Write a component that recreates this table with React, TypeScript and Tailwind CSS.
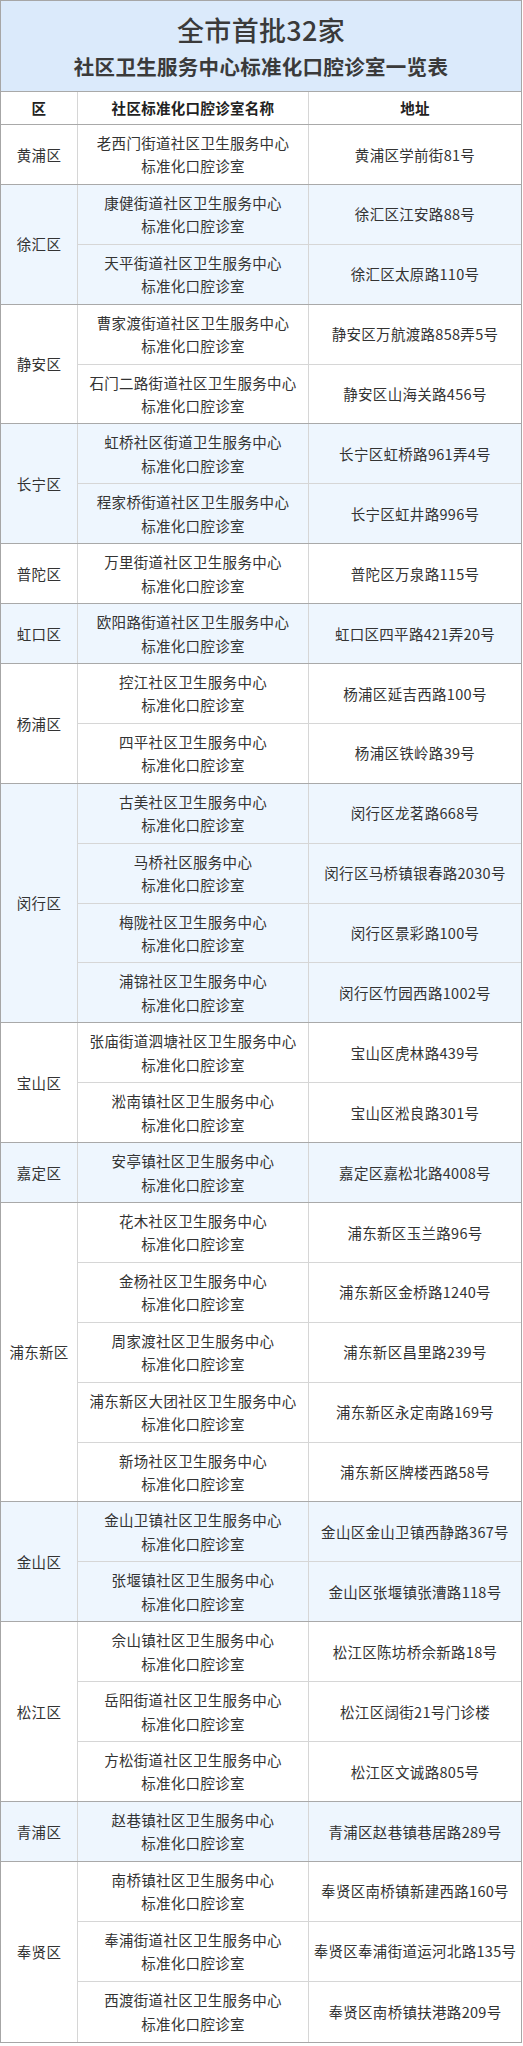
import React from "react";

type Clinic = { name: string; addr: string };
type District = { name: string; clinics: Clinic[] };

const SUFFIX = "标准化口腔诊室";

const districts: District[] = [
  { name: "黄浦区", clinics: [{ name: "老西门街道社区卫生服务中心", addr: "黄浦区学前街81号" }] },
  {
    name: "徐汇区",
    clinics: [
      { name: "康健街道社区卫生服务中心", addr: "徐汇区江安路88号" },
      { name: "天平街道社区卫生服务中心", addr: "徐汇区太原路110号" },
    ],
  },
  {
    name: "静安区",
    clinics: [
      { name: "曹家渡街道社区卫生服务中心", addr: "静安区万航渡路858弄5号" },
      { name: "石门二路街道社区卫生服务中心", addr: "静安区山海关路456号" },
    ],
  },
  {
    name: "长宁区",
    clinics: [
      { name: "虹桥社区街道卫生服务中心", addr: "长宁区虹桥路961弄4号" },
      { name: "程家桥街道社区卫生服务中心", addr: "长宁区虹井路996号" },
    ],
  },
  { name: "普陀区", clinics: [{ name: "万里街道社区卫生服务中心", addr: "普陀区万泉路115号" }] },
  { name: "虹口区", clinics: [{ name: "欧阳路街道社区卫生服务中心", addr: "虹口区四平路421弄20号" }] },
  {
    name: "杨浦区",
    clinics: [
      { name: "控江社区卫生服务中心", addr: "杨浦区延吉西路100号" },
      { name: "四平社区卫生服务中心", addr: "杨浦区铁岭路39号" },
    ],
  },
  {
    name: "闵行区",
    clinics: [
      { name: "古美社区卫生服务中心", addr: "闵行区龙茗路668号" },
      { name: "马桥社区服务中心", addr: "闵行区马桥镇银春路2030号" },
      { name: "梅陇社区卫生服务中心", addr: "闵行区景彩路100号" },
      { name: "浦锦社区卫生服务中心", addr: "闵行区竹园西路1002号" },
    ],
  },
  {
    name: "宝山区",
    clinics: [
      { name: "张庙街道泗塘社区卫生服务中心", addr: "宝山区虎林路439号" },
      { name: "淞南镇社区卫生服务中心", addr: "宝山区淞良路301号" },
    ],
  },
  { name: "嘉定区", clinics: [{ name: "安亭镇社区卫生服务中心", addr: "嘉定区嘉松北路4008号" }] },
  {
    name: "浦东新区",
    clinics: [
      { name: "花木社区卫生服务中心", addr: "浦东新区玉兰路96号" },
      { name: "金杨社区卫生服务中心", addr: "浦东新区金桥路1240号" },
      { name: "周家渡社区卫生服务中心", addr: "浦东新区昌里路239号" },
      { name: "浦东新区大团社区卫生服务中心", addr: "浦东新区永定南路169号" },
      { name: "新场社区卫生服务中心", addr: "浦东新区牌楼西路58号" },
    ],
  },
  {
    name: "金山区",
    clinics: [
      { name: "金山卫镇社区卫生服务中心", addr: "金山区金山卫镇西静路367号" },
      { name: "张堰镇社区卫生服务中心", addr: "金山区张堰镇张漕路118号" },
    ],
  },
  {
    name: "松江区",
    clinics: [
      { name: "佘山镇社区卫生服务中心", addr: "松江区陈坊桥佘新路18号" },
      { name: "岳阳街道社区卫生服务中心", addr: "松江区阔街21号门诊楼" },
      { name: "方松街道社区卫生服务中心", addr: "松江区文诚路805号" },
    ],
  },
  { name: "青浦区", clinics: [{ name: "赵巷镇社区卫生服务中心", addr: "青浦区赵巷镇巷居路289号" }] },
  {
    name: "奉贤区",
    clinics: [
      { name: "南桥镇社区卫生服务中心", addr: "奉贤区南桥镇新建西路160号" },
      { name: "奉浦街道社区卫生服务中心", addr: "奉贤区奉浦街道运河北路135号" },
      { name: "西渡街道社区卫生服务中心", addr: "奉贤区南桥镇扶港路209号" },
    ],
  },
];

function DistrictGroup({ district, shaded, last }: { district: District; shaded: boolean; last: boolean }) {
  const n = district.clinics.length;
  return (
    <div className={`flex ${shaded ? "bg-[#eef6fe]" : "bg-white"} ${last ? "" : "border-b border-[#a9a9a9]"}`}>
      <div className="flex w-[77px] shrink-0 items-center justify-center border-r border-[#d6d6d6]">
        {district.name}
      </div>
      <div className="flex flex-1 flex-col">
        {district.clinics.map((c, i) => (
          // row pitch is ~59.9px; the last row leaves 1px for the group border
          <div
            key={c.name}
            className={`flex ${i < n - 1 ? "h-[59.9px] border-b border-[#d6d6d6]" : last ? "h-[59.9px]" : "h-[58.9px]"}`}
          >
            <div className="flex w-[231px] shrink-0 flex-col items-center justify-center border-r border-[#d6d6d6] leading-[23.5px]">
              <span>{c.name}</span>
              <span>{SUFFIX}</span>
            </div>
            <div className="flex flex-1 items-center justify-center">{c.addr}</div>
          </div>
        ))}
      </div>
    </div>
  );
}

export default function App() {
  return (
    <div
      className="w-[523px] bg-white text-[14.5px] tracking-[0.3px] text-[#333]"
      style={{ fontFamily: '"Noto Sans CJK SC", "Noto Sans", sans-serif' }}
    >
      <div className="w-[522px] border border-[#a6a6a6]">
        <div className="flex h-[91px] flex-col items-center justify-center border-b border-[#a9a9a9] bg-[#dbeafb] text-[#3a3a3a]">
          <h1 className="text-[27px] font-medium leading-[36px]">全市首批32家</h1>
          <h2 className="mt-[3px] text-[20.5px] font-bold leading-[30px]">社区卫生服务中心标准化口腔诊室一览表</h2>
        </div>
        <div className="flex h-[33px] border-b border-[#a9a9a9] font-bold text-[#222]">
          <div className="flex w-[77px] items-center justify-center border-r border-[#d6d6d6]">区</div>
          <div className="flex w-[231px] items-center justify-center border-r border-[#d6d6d6]">社区标准化口腔诊室名称</div>
          <div className="flex flex-1 items-center justify-center">地址</div>
        </div>
        {districts.map((d, i) => (
          <DistrictGroup key={d.name} district={d} shaded={i % 2 === 1} last={i === districts.length - 1} />
        ))}
      </div>
    </div>
  );
}
